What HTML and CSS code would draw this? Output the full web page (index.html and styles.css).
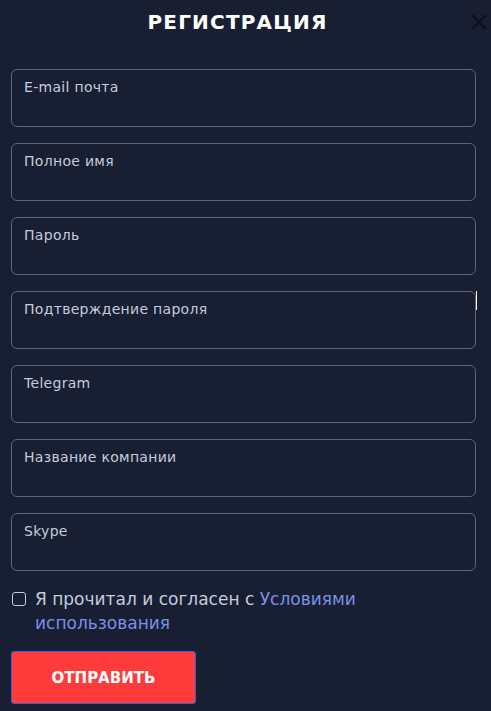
FILE: index.html
```html
<!DOCTYPE html>
<html lang="ru">
<head>
<meta charset="utf-8">
<link rel="stylesheet" href="styles.css">
</head>
<body>
<div class="modal">
  <div class="head">
    <h1 class="title">РЕГИСТРАЦИЯ</h1>
    <button class="close" aria-label="Закрыть">
      <svg width="18" height="18" viewBox="0 0 18 18"><path d="M2 2L16 16M16 2L2 16" stroke="#0c111f" stroke-width="2.2" fill="none"/></svg>
    </button>
  </div>
  <form class="form">
    <label class="field"><span class="label">E-mail почта</span></label>
    <label class="field"><span class="label">Полное имя</span></label>
    <label class="field"><span class="label">Пароль</span></label>
    <label class="field field-mark"><span class="label">Подтверждение пароля</span><span class="mark"></span></label>
    <label class="field"><span class="label">Telegram</span></label>
    <label class="field"><span class="label">Название компании</span></label>
    <label class="field"><span class="label">Skype</span></label>
    <div class="agree">
      <span class="check"></span>
      <p class="agree-text">Я прочитал и согласен с <a class="link" href="#">Условиями использования</a></p>
    </div>
    <button type="button" class="submit">ОТПРАВИТЬ</button>
  </form>
</div>
</body>
</html>
```
FILE: styles.css
```css
html, body {
  margin: 0;
  padding: 0;
  background: #181f32;
}
.modal {
  width: 491px;
  height: 711px;
  box-sizing: border-box;
  padding: 0 15px 0 11px;
  font-family: "DejaVu Sans", sans-serif;
  overflow: hidden;
}
.head {
  position: relative;
  height: 69px;
  display: flex;
  justify-content: center;
}
.title {
  margin: 0;
  padding-top: 10px;
  font-family: "DejaVu Sans", sans-serif;
  font-weight: 700;
  font-size: 20px;
  line-height: 24px;
  color: #ffffff;
  letter-spacing: 1.2px;
  transform: translateX(-6px);
}
.close {
  position: absolute;
  right: -12px;
  top: 13px;
  background: none;
  border: 0;
  padding: 0;
  width: 18px;
  height: 18px;
}
.form {
  display: flex;
  flex-direction: column;
  gap: 16px;
}
.field {
  position: relative;
  display: block;
  height: 58px;
  box-sizing: border-box;
  border: 1px solid #5a6378;
  border-radius: 6px;
  padding: 8px 12px;
}
.label {
  display: block;
  font-size: 14px;
  line-height: 18px;
  letter-spacing: 0.3px;
  color: #c5cbde;
}
.mark {
  position: absolute;
  right: -2px;
  top: -1px;
  width: 1px;
  height: 19px;
  background: #ffffff;
}
.agree {
  display: flex;
  align-items: flex-start;
  gap: 9px;
}
.check {
  flex: none;
  width: 12px;
  height: 12px;
  border: 1px solid #c5cbde;
  border-radius: 3px;
  margin: 5px 0 0 1px;
}
.agree-text {
  margin: 0;
  max-width: 420px;
  font-size: 17px;
  line-height: 24px;
  color: #c5cbde;
}
.link {
  color: #7b8fe6;
  text-decoration: none;
}
.submit {
  align-self: flex-start;
  width: 185px;
  height: 53px;
  background: #ff3a3a;
  border: 1px solid #3a5fd0;
  border-radius: 3px;
  color: #ffffff;
  font-family: "DejaVu Sans", sans-serif;
  font-weight: 700;
  font-size: 15px;
  letter-spacing: 0;
}
```
